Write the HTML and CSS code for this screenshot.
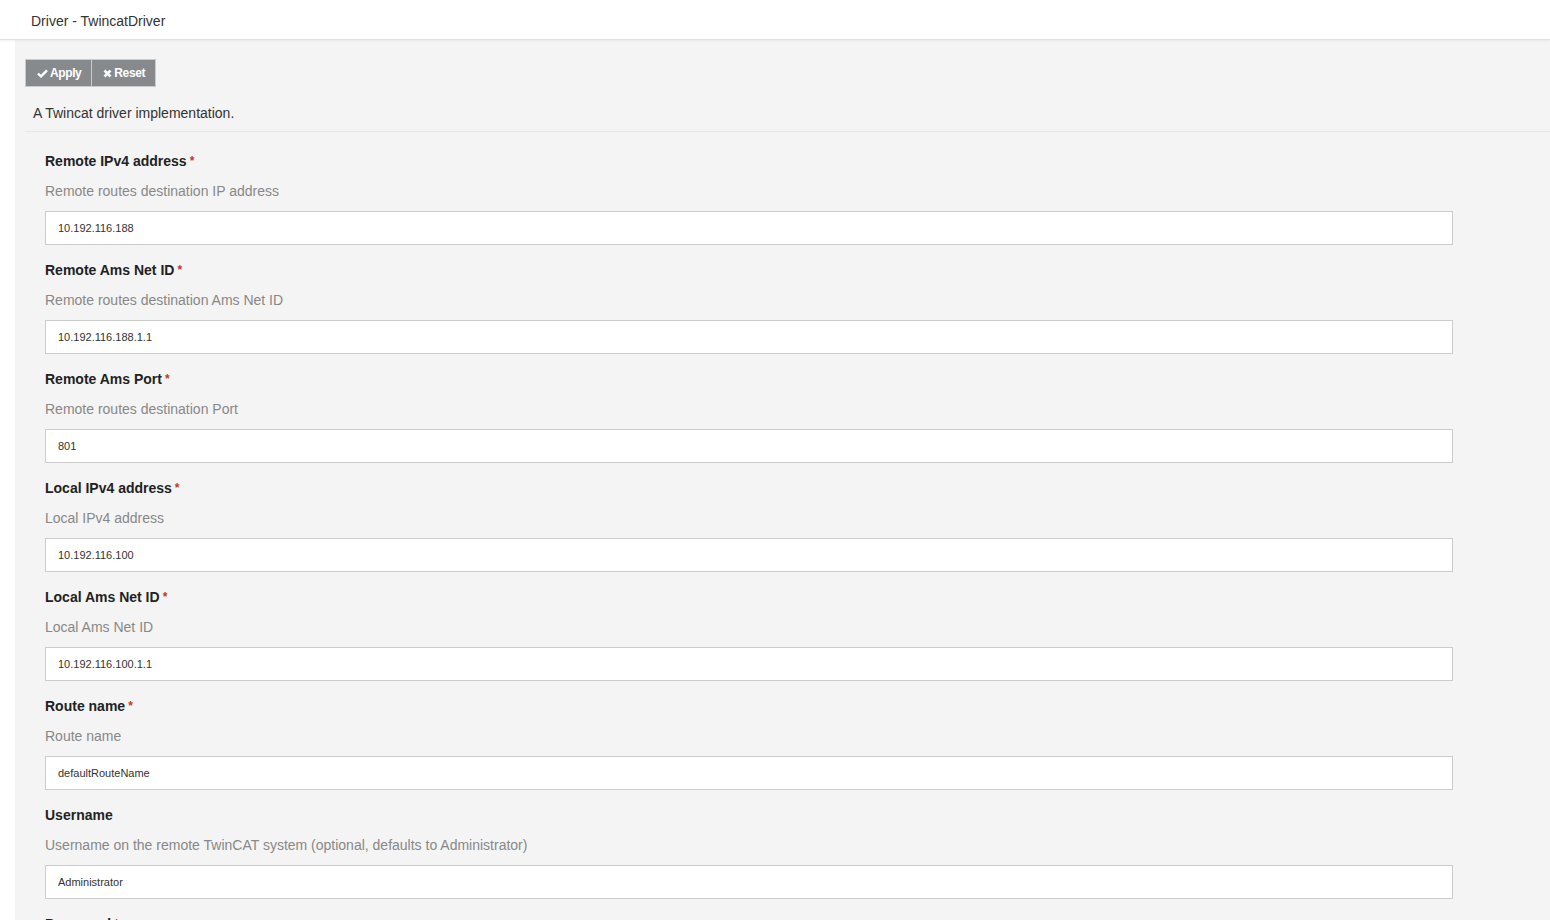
FILE: index.html
```html
<!DOCTYPE html>
<html lang="en">
<head>
  <meta charset="UTF-8" />
  <title>Driver - TwincatDriver</title>
  <link rel="stylesheet" href="styles.css">
</head>
<body>
  <div class="page-header">Driver - TwincatDriver</div>
  <div class="panel">
    <div class="toolbar">
      <button type="button" class="btn">
        <svg width="11" height="9" viewBox="0 0 11 9"><path d="M1 4.6 L4 7.4 L10 1.4" fill="none" stroke="#fff" stroke-width="2.4"/></svg>
        Apply
      </button>
      <button type="button" class="btn">
        <svg width="9" height="9" viewBox="0 0 9 9"><path d="M1.5 1.5 L7.5 7.5 M7.5 1.5 L1.5 7.5" fill="none" stroke="#fff" stroke-width="2.6"/></svg>
        Reset
      </button>
    </div>
    <div class="intro">A Twincat driver implementation.</div>

    <div class="fields">
      <div class="field">
        <label>Remote IPv4 address<span class="req">*</span></label>
        <div class="help">Remote routes destination IP address</div>
        <input type="text" value="10.192.116.188" />
      </div>
      <div class="field">
        <label>Remote Ams Net ID<span class="req">*</span></label>
        <div class="help">Remote routes destination Ams Net ID</div>
        <input type="text" value="10.192.116.188.1.1" />
      </div>
      <div class="field">
        <label>Remote Ams Port<span class="req">*</span></label>
        <div class="help">Remote routes destination Port</div>
        <input type="text" value="801" />
      </div>
      <div class="field">
        <label>Local IPv4 address<span class="req">*</span></label>
        <div class="help">Local IPv4 address</div>
        <input type="text" value="10.192.116.100" />
      </div>
      <div class="field">
        <label>Local Ams Net ID<span class="req">*</span></label>
        <div class="help">Local Ams Net ID</div>
        <input type="text" value="10.192.116.100.1.1" />
      </div>
      <div class="field">
        <label>Route name<span class="req">*</span></label>
        <div class="help">Route name</div>
        <input type="text" value="defaultRouteName" />
      </div>
      <div class="field">
        <label>Username</label>
        <div class="help">Username on the remote TwinCAT system (optional, defaults to Administrator)</div>
        <input type="text" value="Administrator" />
      </div>
      <div class="field">
        <label>Password<span class="req">*</span></label>
        <div class="help">Password on the remote TwinCAT system</div>
        <input type="password" value="1" />
      </div>
    </div>
  </div>
</body>
</html>
```
FILE: styles.css
```css
html, body {
  margin: 0;
  height: 100%;
  overflow: hidden;
}
body {
  font-family: "Liberation Sans", Arial, sans-serif;
  font-size: 14px;
  color: #333;
  background: #fff;
}
.page-header {
  height: 39px;
  line-height: 42px;
  padding-left: 31px;
  font-size: 14px;
  color: #333;
  background: #fff;
  border-bottom: 1px solid #e2e2e2;
  box-shadow: 0 1px 2px rgba(0,0,0,0.06);
  position: relative;
}
.panel {
  margin-left: 15px;
  background: #f4f4f4;
  padding: 19px 0 0 10px;
  min-height: 900px;
}
.toolbar {
  display: flex;
}
.btn {
  height: 28px;
  padding: 0 10px 0 11px;
  background: #878a8c;
  color: #fff;
  border: 1px solid #c9cbcc;
  font-family: "Liberation Sans", Arial, sans-serif;
  font-size: 12px;
  font-weight: bold;
  letter-spacing: -0.4px;
  display: flex;
  align-items: center;
  gap: 2px;
  cursor: pointer;
}
.btn + .btn {
  border-left: none;
}
.intro {
  margin-top: 16px;
  line-height: 20px;
  padding: 0 0 8px 8px;
  border-bottom: 1px solid #e6e6e6;
}
.fields {
  padding: 19px 0 0 20px;
}
.field {
  margin-bottom: 15px;
}
.field label {
  display: block;
  font-weight: bold;
  line-height: 20px;
  color: #222;
}
.req {
  color: #c0392b;
  margin-left: 3px;
  font-size: 12px;
  vertical-align: top;
}
.help {
  margin-top: 10px;
  line-height: 20px;
  color: #888;
}
.field input {
  display: block;
  box-sizing: border-box;
  margin-top: 10px;
  width: 1408px;
  height: 34px;
  padding: 0 12px;
  border: 1px solid #ccc;
  background: #fff;
  font-family: "Liberation Sans", Arial, sans-serif;
  font-size: 11px;
  color: #333;
}
```
